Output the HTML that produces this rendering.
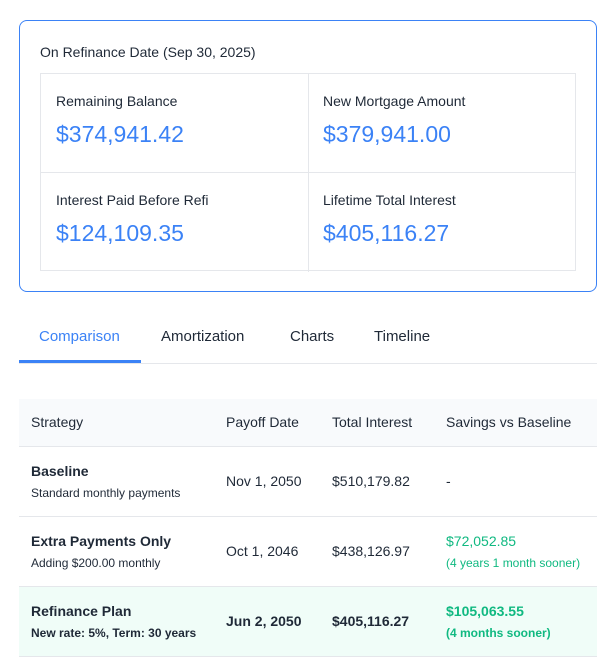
<!DOCTYPE html>
<html><head><meta charset="utf-8"><style>
*{box-sizing:border-box;margin:0;padding:0}
body{width:609px;height:668px;background:#fff;font-family:"Liberation Sans",sans-serif;color:#1f2937;position:relative;overflow:hidden}
.card{position:absolute;left:19px;top:20px;width:578px;height:272px;border:1px solid #3b82f6;border-radius:8px}
.title{position:absolute;left:20px;top:23px;font-size:14px;color:#1f2937}
.grid{position:absolute;left:20px;top:52px;width:536px;height:198px;border:1px solid #e5e7eb}
.cell{position:absolute;width:268px;height:99px}
.lbl{position:absolute;left:15px;top:19px;font-size:14px;color:#1f2937}
.val{position:absolute;left:15px;top:47px;font-size:23px;color:#3b82f6}
.tabs{position:absolute;left:19px;top:320px;width:578px;height:44px;border-bottom:1px solid #e5e7eb}
.tab{position:absolute;top:8px;font-size:15px;color:#1f2937}
.ul{position:absolute;left:0;top:40px;width:122px;height:3px;background:#3b82f6}
table{position:absolute;left:19px;top:399px;width:578px;border-collapse:collapse;font-size:14px;table-layout:fixed}
th{background:#f8fafc;text-align:left;font-weight:normal;height:47px;border-bottom:1px solid #e5e7eb;padding:0}
td{height:70px;border-bottom:1px solid #e5e7eb;padding:0;vertical-align:middle}
.s{font-size:12px;margin-top:7px}
.g{color:#10b981}
.hl td{background:#f0fdf8;font-weight:bold}
</style></head><body>
<div class="card">
<div class="title">On Refinance Date (Sep 30, 2025)</div>
<div class="grid">
<div class="cell" style="left:0;top:0;border-right:1px solid #e5e7eb;border-bottom:1px solid #e5e7eb"><div class="lbl">Remaining Balance</div><div class="val">$374,941.42</div></div>
<div class="cell" style="left:267px;top:0;border-bottom:1px solid #e5e7eb"><div class="lbl">New Mortgage Amount</div><div class="val">$379,941.00</div></div>
<div class="cell" style="left:0;top:99px;border-right:1px solid #e5e7eb"><div class="lbl">Interest Paid Before Refi</div><div class="val">$124,109.35</div></div>
<div class="cell" style="left:267px;top:99px"><div class="lbl">Lifetime Total Interest</div><div class="val">$405,116.27</div></div>
</div></div>
<div class="tabs">
<div class="tab" style="left:20px;color:#3b82f6">Comparison</div>
<div class="tab" style="left:142px">Amortization</div>
<div class="tab" style="left:271px">Charts</div>
<div class="tab" style="left:355px">Timeline</div>
<div class="ul"></div>
</div>
<table>
<colgroup><col style="width:207px"><col style="width:106px"><col style="width:114px"><col></colgroup>
<tr><th style="padding-left:12px">Strategy</th><th>Payoff Date</th><th>Total Interest</th><th>Savings vs Baseline</th></tr>
<tr><td style="padding-left:12px"><b>Baseline</b><div class="s">Standard monthly payments</div></td><td>Nov 1, 2050</td><td>$510,179.82</td><td>-</td></tr>
<tr><td style="padding-left:12px"><b>Extra Payments Only</b><div class="s">Adding $200.00 monthly</div></td><td>Oct 1, 2046</td><td>$438,126.97</td><td class="g">$72,052.85<div class="s">(4 years 1 month sooner)</div></td></tr>
<tr class="hl"><td style="padding-left:12px">Refinance Plan<div class="s">New rate: 5%, Term: 30 years</div></td><td>Jun 2, 2050</td><td>$405,116.27</td><td class="g">$105,063.55<div class="s">(4 months sooner)</div></td></tr>
</table>
</body></html>
